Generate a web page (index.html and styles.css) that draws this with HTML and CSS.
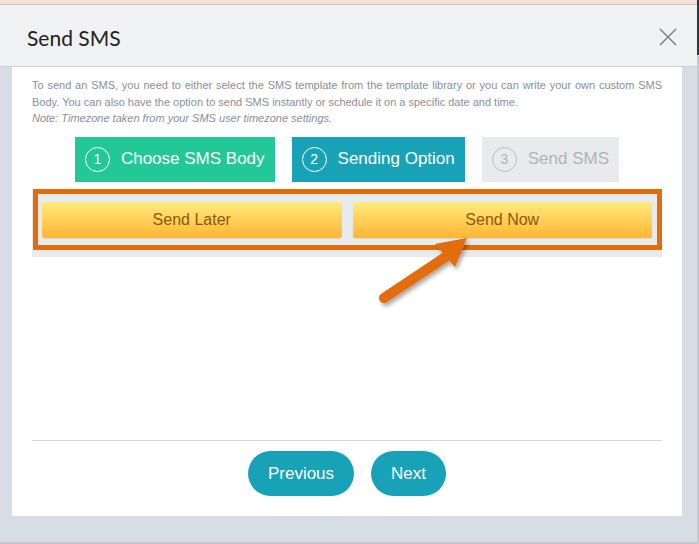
FILE: index.html
```html
<!DOCTYPE html>
<html>
<head>
<meta charset="utf-8">
<link rel="stylesheet" href="styles.css">
</head>
<body>
<div class="page">
  <div class="main">
    <div class="topstrip"></div>
    <div class="header">
      <h1 class="title">Send SMS</h1>
      <svg class="close" width="18" height="18" viewBox="0 0 18 18"><path d="M1 1L17 17M17 1L1 17" stroke="#7a7a7a" stroke-width="1.4" fill="none"/></svg>
    </div>
    <div class="body">
      <div class="panel">
        <p class="intro">To send an SMS, you need to either select the SMS template from the template library or you can write your own custom SMS Body. You can also have the option to send SMS instantly or schedule it on a specific date and time.<br><em>Note: Timezone taken from your SMS user timezone settings.</em></p>
        <div class="steps">
          <div class="step step-done"><span class="num">1</span><span>Choose SMS Body</span></div>
          <div class="step step-active"><span class="num">2</span><span>Sending Option</span></div>
          <div class="step step-todo"><span class="num">3</span><span>Send SMS</span></div>
        </div>
        <div class="options">
          <button class="opt">Send Later</button>
          <button class="opt">Send Now</button>
          <div class="highlight"></div>
        </div>
        <svg class="arrow" width="110" height="85" viewBox="0 0 110 85">
          <defs>
            <filter id="sh" x="-30%" y="-30%" width="160%" height="160%">
              <feDropShadow dx="2" dy="3" stdDeviation="2" flood-color="#000" flood-opacity="0.35"/>
            </filter>
          </defs>
          <g filter="url(#sh)">
            <line x1="12" y1="71" x2="75" y2="29" stroke="#e36c0a" stroke-width="10" stroke-linecap="round"/>
            <polygon points="95,11 63,17 83,40" fill="#e36c0a"/>
          </g>
        </svg>
        <div class="footer">
          <button class="nav">Previous</button>
          <button class="nav">Next</button>
        </div>
      </div>
    </div>
    <div class="bottomline"></div>
  </div>
  <div class="scroll"><div class="scroll-thumb"></div></div>
</div>
</body>
</html>
```
FILE: styles.css
```css
* { box-sizing: border-box; }
html, body { margin: 0; padding: 0; }
body {
  width: 699px;
  height: 544px;
  overflow: hidden;
  background: #d8dce4;
  font-family: "Liberation Sans", Arial, sans-serif;
}
.page { display: flex; width: 699px; height: 544px; }
.main { width: 697px; display: flex; flex-direction: column; }
.scroll { width: 2px; background: #c6cad2; }
.scroll-thumb { height: 55px; background: #2f3440; }
.topstrip {
  height: 5px;
  background: #f5e0d8;
  border-bottom: 1px solid #c8c2bf;
}
.header {
  height: 62px;
  background: #f0f1f3;
  border-bottom: 1px solid #cfd0d3;
  display: flex;
  align-items: center;
  justify-content: space-between;
  padding: 4px 20px 0 27px;
}
.title {
  margin: 0;
  font-family: Lato, "Liberation Sans", sans-serif;
  font-weight: 400;
  font-size: 21px;
  color: #222;
}
.close { display: block; margin-top: -2px; }
.body { padding-left: 12px; flex: none; }
.panel {
  position: relative;
  width: 670px;
  height: 449px;
  background: #fff;
  padding: 10px 20px 0 20px;
  display: flex;
  flex-direction: column;
}
.intro {
  margin: 0;
  font-size: 11px;
  line-height: 16.5px;
  color: #8a8e99;
  text-align: justify;
}
.intro em { font-style: italic; }
.steps {
  display: flex;
  justify-content: center;
  gap: 17px;
  margin-top: 10px;
}
.step {
  height: 45px;
  display: flex;
  align-items: center;
  gap: 11px;
  padding: 0 10px;
  font-size: 17px;
  color: #fff;
}
.num {
  width: 25px;
  height: 25px;
  border-radius: 50%;
  border: 1.5px solid #fff;
  display: flex;
  align-items: center;
  justify-content: center;
  font-size: 14px;
}
.step-done { background: #22c896; }
.step-active { background: #18a2b7; }
.step-todo { background: #e8eaed; color: #b3b3b3; }
.step-todo .num { border-color: #bdbdbd; }
.options {
  position: relative;
  margin-top: 7px;
  background: #e8ebee;
  padding: 13px 10px 19px;
  display: flex;
  gap: 11px;
}
.opt {
  flex: 1;
  height: 36px;
  border: none;
  border-radius: 2px;
  background: linear-gradient(#ffeb7e, #ffb534);
  color: #8a5a0c;
  font-family: "Liberation Sans", Arial, sans-serif;
  font-size: 16px;
  padding: 0;
  box-shadow: 0 1px 1px rgba(0,0,0,0.08);
}
.highlight {
  position: absolute;
  left: 1px;
  right: 0;
  top: 0;
  height: 61px;
  border: 5px solid #e36c0a;
}
.arrow {
  position: absolute;
  left: 360px;
  top: 160px;
}
.footer {
  margin-top: auto;
  border-top: 1px solid #d9d9d9;
  padding: 10px 0 20px;
  display: flex;
  justify-content: center;
  gap: 17px;
}
.nav {
  height: 45px;
  border: none;
  border-radius: 23px;
  background: #18a2b7;
  color: #fff;
  font-family: "Liberation Sans", Arial, sans-serif;
  font-size: 17px;
  padding: 0 20px;
}
.bottomline {
  margin-top: auto;
  height: 2px;
  background: #c4c4c4;
}
```
